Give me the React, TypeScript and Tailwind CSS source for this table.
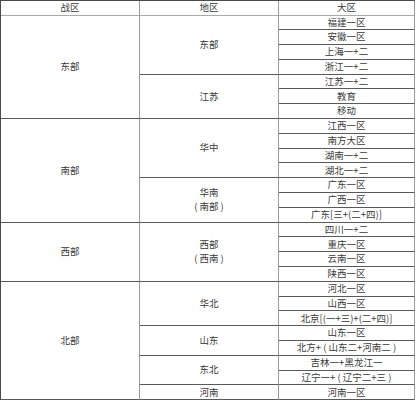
type Region = { name: string[]; zones: string[] };
type Theater = { name: string; regions: Region[] };

const DATA: Theater[] = [
    {
        name: '东部',
        regions: [
            { name: ['东部'], zones: ['福建一区', '安徽一区', '上海一+二', '浙江一+二'] },
            { name: ['江苏'], zones: ['江苏一+二', '教育', '移动'] },
        ],
    },
    {
        name: '南部',
        regions: [
            { name: ['华中'], zones: ['江西一区', '南方大区', '湖南一+二', '湖北一+二'] },
            { name: ['华南', '( 南部 )'], zones: ['广东一区', '广西一区', '广东[三+(二+四)]'] },
        ],
    },
    {
        name: '西部',
        regions: [
            { name: ['西部', '( 西南 )'], zones: ['四川一+二', '重庆一区', '云南一区', '陕西一区'] },
        ],
    },
    {
        name: '北部',
        regions: [
            { name: ['华北'], zones: ['河北一区', '山西一区', '北京[(一+三)+(二+四)]'] },
            { name: ['山东'], zones: ['山东一区', '北方+ ( 山东二+河南二 )'] },
            { name: ['东北'], zones: ['吉林一+黑龙江一', '辽宁一+ ( 辽宁二+三 )'] },
            { name: ['河南'], zones: ['河南一区'] },
        ],
    },
];

const cell =
    'flex items-center justify-center border-r border-b border-r-[#9a9a9a] border-b-[#5a5a5a]';

export default function App() {
    return (
        <div className="h-[400px] w-[417px] overflow-hidden bg-white">
            <div
                className="w-[415px] border-l border-t border-[#4a4a4a] text-[9.5px] leading-none text-[#3a3a3a]"
                style={{ fontFamily: '"Noto Sans CJK SC", "Noto Sans", sans-serif' }}
            >
                {/* Header */}
                <div className="flex h-[14.5px]">
                    <div className={`${cell} w-[139px] border-b-[#aaa]`}>战区</div>
                    <div className={`${cell} w-[139px] border-b-[#aaa]`}>地区</div>
                    <div className={`${cell} w-[136px] border-b-[#aaa] border-r-[#4a4a4a]`}>大区</div>
                </div>

                {DATA.map((t) => (
                    <div key={t.name} className="flex">
                        <div className={`${cell} w-[139px]`}>{t.name}</div>
                        <div className="flex flex-col">
                            {t.regions.map((r) => (
                                <div key={r.name[0]} className="flex">
                                    <div
                                        className={`${cell} w-[139px] flex-col gap-[5px]`}
                                    >
                                        {r.name.map((n) => (
                                            <span key={n}>{n}</span>
                                        ))}
                                    </div>
                                    <div className="flex flex-col">
                                        {r.zones.map((z) => (
                                            <div
                                                key={z}
                                                className={`${cell} h-[14.8px] w-[136px] border-r-[#4a4a4a] whitespace-nowrap`}
                                            >
                                                {z}
                                            </div>
                                        ))}
                                    </div>
                                </div>
                            ))}
                        </div>
                    </div>
                ))}
            </div>
        </div>
    );
}
